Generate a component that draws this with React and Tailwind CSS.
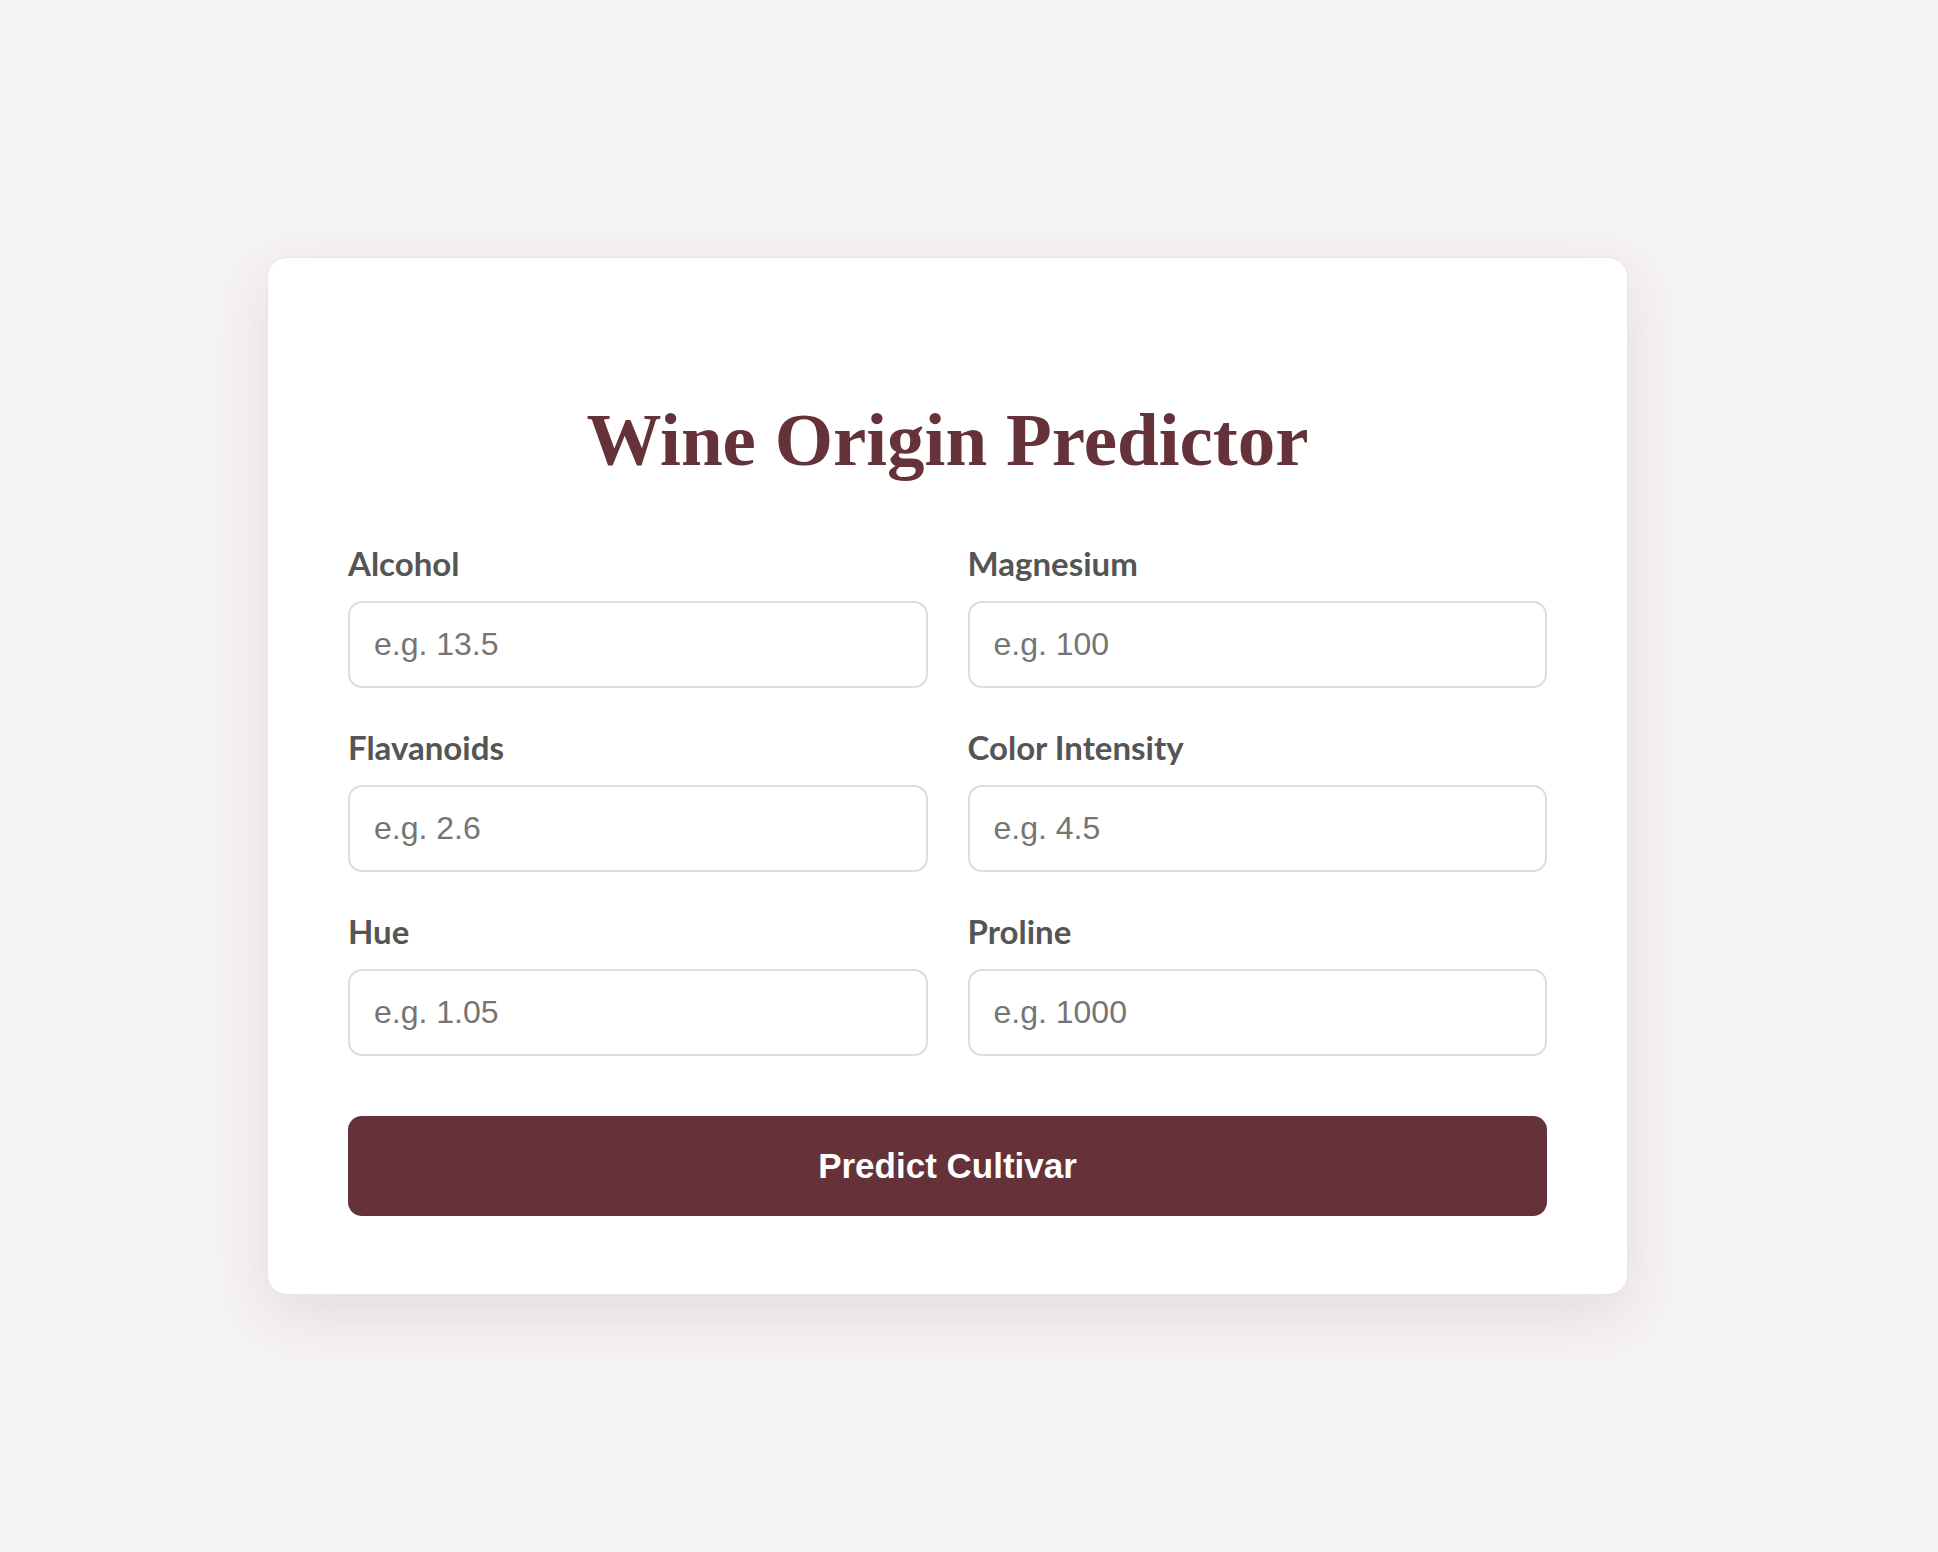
import { useState } from "react"

const fields = [
  { id: "alcohol", label: "Alcohol", placeholder: "e.g. 13.5" },
  { id: "magnesium", label: "Magnesium", placeholder: "e.g. 100" },
  { id: "flavanoids", label: "Flavanoids", placeholder: "e.g. 2.6" },
  { id: "color_intensity", label: "Color Intensity", placeholder: "e.g. 4.5" },
  { id: "hue", label: "Hue", placeholder: "e.g. 1.05" },
  { id: "proline", label: "Proline", placeholder: "e.g. 1000" },
]

export default function App() {
  const [values, setValues] = useState({})

  const handleChange = (id, value) => {
    setValues((prev) => ({ ...prev, [id]: value }))
  }

  return (
    <div className="min-h-screen bg-[#f6f3f4] flex items-center justify-center pr-[43px]">
      <div className="w-[1361px] bg-white border border-[#ebe4e6] rounded-[20px] px-[80px] pt-[80px] pb-[78px] shadow-[0_20px_60px_rgba(101,50,58,0.12)]">
        <h1 className="mt-[60px] mb-[63px] text-center text-[75px] leading-[83px] font-bold text-[#65323a] [font-family:'Liberation_Serif',serif]">
          Wine Origin Predictor
        </h1>

        <form onSubmit={(e) => e.preventDefault()}>
          <div className="grid grid-cols-2 gap-x-[40px] gap-y-[40px]">
            {fields.map((field) => (
              <div key={field.id}>
                <label
                  htmlFor={field.id}
                  className="block mb-[18px] text-[33px] leading-[39px] font-bold text-[#555555] [font-family:Lato,sans-serif]"
                >
                  {field.label}
                </label>
                <input
                  id={field.id}
                  type="number"
                  step="any"
                  value={values[field.id] || ""}
                  onChange={(e) => handleChange(field.id, e.target.value)}
                  placeholder={field.placeholder}
                  className="block w-full h-[87px] px-[24px] border-2 border-[#dddddd] rounded-[14px] text-[32px] text-[#333] placeholder:text-[#757575] outline-none [font-family:'Liberation_Sans',Arial,sans-serif]"
                />
              </div>
            ))}
          </div>

          <button
            type="submit"
            className="mt-[60px] w-full h-[100px] rounded-[14px] bg-[#65323a] text-white text-[35px] font-bold [font-family:'Liberation_Sans',Arial,sans-serif]"
          >
            Predict Cultivar
          </button>
        </form>
      </div>
    </div>
  )
}
